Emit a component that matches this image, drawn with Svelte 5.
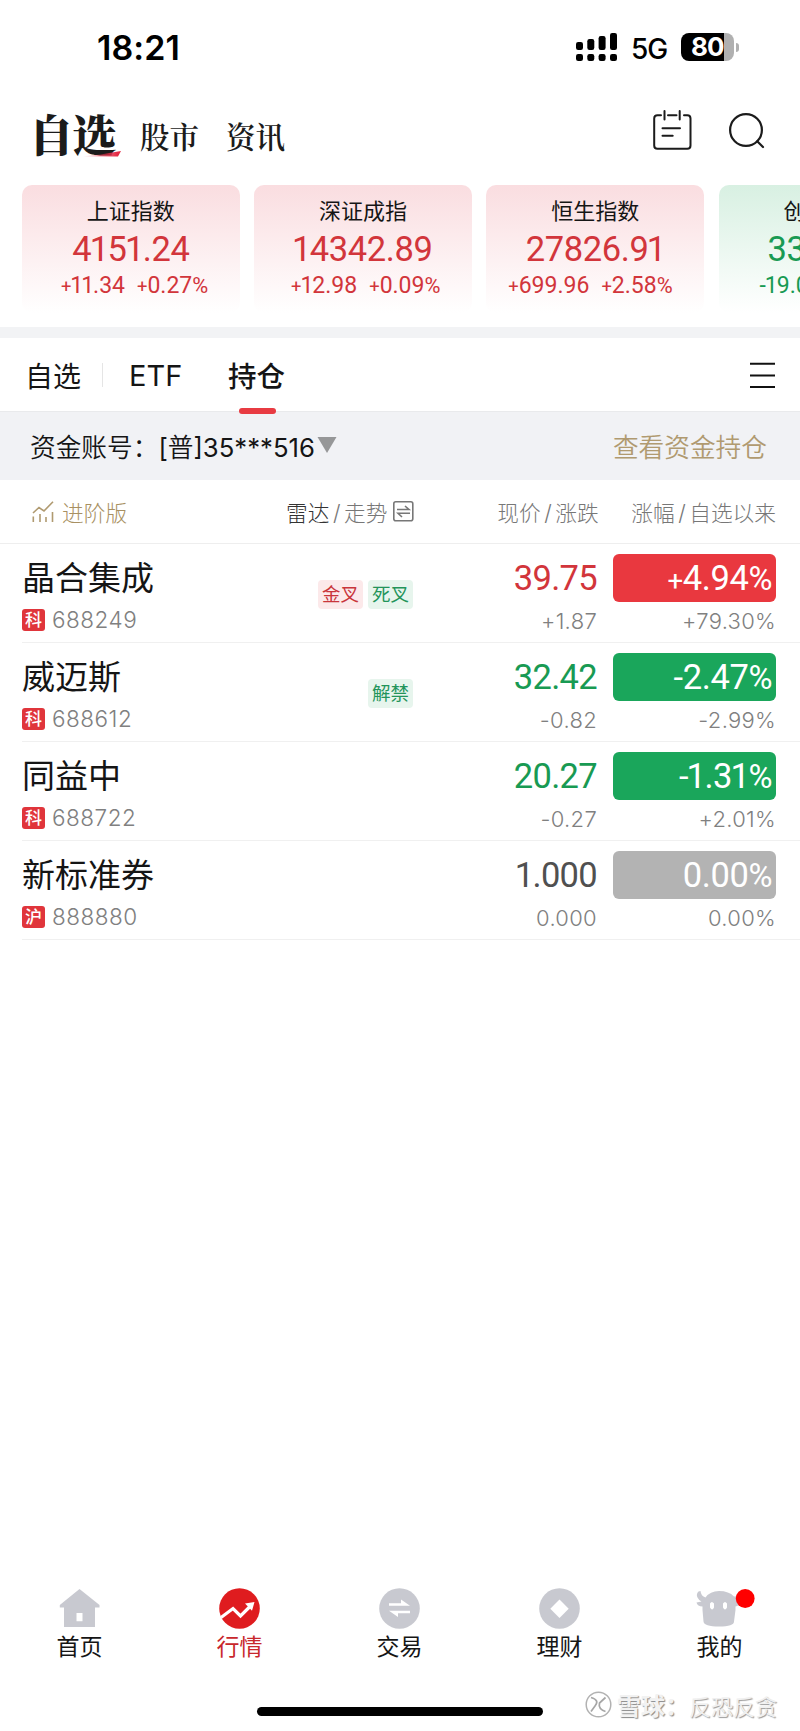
<script>
  const indices = [
    { name: '上证指数', value: '4151.24', diff: '+11.34', pct: '+0.27%', dir: 'up' },
    { name: '深证成指', value: '14342.89', diff: '+12.98', pct: '+0.09%', dir: 'up' },
    { name: '恒生指数', value: '27826.91', diff: '+699.96', pct: '+2.58%', dir: 'up' },
    { name: '创业板指', value: '3306.16', diff: '-19.05', pct: '-0.57%', dir: 'down' }
  ];

  const stocks = [
    { name: '晶合集成', mark: '科', code: '688249', tags: [['金叉', 'up'], ['死叉', 'down']], price: '39.75', diff: '+1.87', pct: '+4.94%', since: '+79.30%', dir: 'up' },
    { name: '威迈斯', mark: '科', code: '688612', tags: [['解禁', 'down']], price: '32.42', diff: '-0.82', pct: '-2.47%', since: '-2.99%', dir: 'down' },
    { name: '同益中', mark: '科', code: '688722', tags: [], price: '20.27', diff: '-0.27', pct: '-1.31%', since: '+2.01%', dir: 'down' },
    { name: '新标准券', mark: '沪', code: '888880', tags: [], price: '1.000', diff: '0.000', pct: '0.00%', since: '0.00%', dir: 'flat' }
  ];

  const kinds = { '1': 'one', '+': 'plus', '%': 'percent' };
  const runs = (text) => text.match(/[1+%]|[^1+%]+/g);
</script>

{#snippet figure(text)}{#each runs(text) as r}<span class={kinds[r] ?? 'plain'}>{r}</span>{/each}{/snippet}

<div class="screen">
  <div class="status">
    <span class="time">18:21</span>
    <svg class="signal" width="41" height="28" viewBox="0 0 41 28">
      <rect x="0" y="9" width="7" height="8" rx="2.2" /><rect x="11.3" y="6" width="7" height="11" rx="2.2" />
      <rect x="22.6" y="3" width="7" height="14" rx="2.2" /><rect x="34" y="0" width="7" height="17" rx="2.2" />
      <rect x="0" y="21" width="7" height="7" rx="2.2" /><rect x="11.3" y="21" width="7" height="7" rx="2.2" />
      <rect x="22.6" y="21" width="7" height="7" rx="2.2" /><rect x="34" y="21" width="7" height="7" rx="2.2" />
    </svg>
    <span class="net">5G</span>
    <span class="battery">80</span><i class="nub"></i>
  </div>

  <header>
    <h1>自选<svg class="swash" width="39" height="6" viewBox="0 0 39 6"><defs><linearGradient id="sw"><stop offset="0" stop-color="#e9304a" stop-opacity="0" /><stop offset="0.9" stop-color="#e42c46" /></linearGradient></defs><path d="M0 5.5Q18 4 39 0L36 5.5Z" fill="url(#sw)" /></svg></h1>
    <span class="h2">股市</span>
    <span class="h2 second">资讯</span>
    <svg class="calendar" width="39" height="41" viewBox="0 0 39 41" fill="none" stroke="#1b1b1b" stroke-width="2" stroke-linecap="round">
      <path d="M8 5.2H4.5Q1.2 5.2 1.2 8.5V35.5Q1.2 38.8 4.5 38.8H34.3Q37.5 38.8 37.5 35.5V8.5Q37.5 5.2 34.3 5.2H31M15 5.2H23.5M11.5 1V9.5M26.7 1V9.5M9.5 18.2H27M9.5 25.8H19.7" />
    </svg>
    <svg class="search" width="36" height="36" viewBox="0 0 36 36" fill="none" stroke="#1b1b1b" stroke-width="2.2" stroke-linecap="round">
      <circle cx="17" cy="17" r="15.9" /><path d="M28.2 28.2L34 34" />
    </svg>
  </header>

  <section class="indices">
    {#each indices as i}
      <div class="card {i.dir}">
        <div class="iname">{i.name}</div>
        <div class="ivalue">{@render figure(i.value)}</div>
        <div class="ichange"><div class="idiff">{@render figure(i.diff)}</div><div>{@render figure(i.pct)}</div></div>
      </div>
    {/each}
  </section>

  <div class="band"></div>

  <nav class="tabs">
    <span class="t1">自选</span><i class="sep"></i><span class="t2">ETF</span><span class="t3">持仓</span>
    <svg class="menu" width="25" height="26" viewBox="0 0 25 26" stroke="#111" stroke-width="2"><path d="M0 1.8H25M0 13.6H25M0 25H25" /></svg>
  </nav>

  <div class="account">
    <span class="acct">资金账号：<b>[</b>普<b>]35***516</b></span>
    <svg class="tri" width="20" height="16" viewBox="0 0 20 16"><path d="M.5 0H19.5L10 16Z" fill="#969798" /></svg>
    <span class="link">查看资金持仓</span>
  </div>

  <div class="heads">
    <svg class="adv" width="22" height="21" viewBox="0 0 22 21" fill="none" stroke="#b09a70" stroke-width="1.6"><path d="M1 12L7 6.5L12 10L21 .7M1.3 15.5V21M8 13V21M14 16V21M20.5 11V21" /></svg>
    <span class="advt">进阶版</span>
    <span class="radar"><em>雷达</em><s>/</s>走势</span>
    <svg class="swap" width="21" height="21" viewBox="0 0 21 21" fill="none" stroke="#777" stroke-width="1.6"><rect x=".8" y=".8" width="19" height="19" rx="2" /><path d="M4 8.5H16L12 5M17 12.3H5L9 16" /></svg>
    <span class="hprice">现价<s>/</s>涨跌</span>
    <span class="hpct">涨幅<s>/</s>自选以来</span>
  </div>

  <main>
    {#each stocks as s}
      <div class="row">
        <div class="who">
          <div class="name">{s.name}</div>
          <div class="sub"><span class="mark">{s.mark}</span><span class="code">{s.code}</span></div>
        </div>
        <div class="tags">{#each s.tags as t}<span class="tag {t[1]}">{t[0]}</span>{/each}</div>
        <div class="pcol"><div class="price {s.dir}">{@render figure(s.price)}</div><div class="small">{s.diff}</div></div>
        <div class="ccol"><div class="pill {s.dir}">{@render figure(s.pct)}</div><div class="small">{s.since}</div></div>
      </div>
    {/each}
  </main>

  <footer>
    <div class="item">
      <svg width="41" height="41" viewBox="0 0 41 41"><path fill="#c8c9d0" fill-rule="evenodd" d="M20.5 1L40.5 17V19.5H36V39H5V19.5H.8V17ZM17.5 25V33.2H23.5V25Z" /></svg>
      <span>首页</span>
    </div>
    <div class="item active">
      <svg width="41" height="41" viewBox="0 0 41 41"><circle cx="20.5" cy="20.5" r="20.3" fill="#df1c1f" /><path d="M2 29.5L14 20.5L21.5 28L31 18.5" fill="none" stroke="#fff" stroke-width="3.2" /><path d="M26 15.5L35.5 14L33 22.8Z" fill="#fff" /></svg>
      <span>行情</span>
    </div>
    <div class="item">
      <svg width="41" height="41" viewBox="0 0 41 41"><circle cx="20.5" cy="20.5" r="20.3" fill="#c8c9d0" /><path fill="#fff" d="M10 15.2H22L22 11.5L31 17.8H10ZM31 25.3H19V29L10 22.7H31Z" /></svg>
      <span>交易</span>
    </div>
    <div class="item">
      <svg width="41" height="41" viewBox="0 0 41 41"><circle cx="20.5" cy="20.5" r="20.3" fill="#c8c9d0" /><path fill="#fff" d="M20.5 11.5L29.7 20.7L20.5 30L11.3 20.7Z" /></svg>
      <span>理财</span>
    </div>
    <div class="item">
      <svg width="62" height="41" viewBox="0 0 62 41"><path fill="#c8c9d0" fill-rule="evenodd" d="M7.500 3C4.500 3 3 6.500 4.500 9.500Q6 12.500 8.500 13.500L3.500 14.500Q4.500 18.500 9.500 18.500V22L10.500 33.500Q11 38.500 26 38.500Q41 38.500 41 33.500L42.500 22V18.500Q46 18 47 14.500L43.500 13.500Q47 12 47 8L41 8.500Q36 3 26 3Q17 3 12.500 9.500Q8 8 7.500 3ZM17 17.500V19.500Q19.200 23.500 21 19.500V15.500Q18.800 12.500 17 15.500ZM30 17.500V19.500Q32 23.500 34 19.500V15.500Q32 12.500 30 15.500Z" /><circle cx="52.2" cy="10.500" r="9.400" fill="#f00" /></svg>
      <span>我的</span>
    </div>
  </footer>
  <div class="bottom">
    <i class="home"></i>
    <div class="water">
      <svg width="27" height="27" viewBox="0 0 27 27" fill="none"><circle cx="13.500" cy="13.500" r="12.300" stroke="#b2b2b2" stroke-width="1.500" /><path d="M6 6.500Q15 9 10 15L6 20.500M20.500 6.500L14.500 12Q13 18 20.500 20.500" stroke="#a6a6a6" stroke-width="1.700" /></svg>
      <span class="brand">雪球：</span><span class="user">反恐反贪</span>
    </div>
  </div>
</div>

<style>
  :global(body) { background: #fff; }
  .screen { width: 800px; height: 1731px; overflow: hidden; background: #fff; color: #151515; font-family: Inter, "Noto Sans CJK SC", sans-serif; display: flex; flex-direction: column; white-space: nowrap; }
  .screen * { box-sizing: border-box; }
  svg { display: block; flex: none; }
  .status { height: 95px; display: flex; padding-left: 97px; color: #000; flex: none; }
  .time { font-size: 34px; font-weight: 600; line-height: 40px; margin-top: 28px; width: 479px; letter-spacing: .1px; }
  .signal { margin-top: 33px; }
  .net { margin: 32px 0 0 14px; font-size: 28px; font-weight: 500; line-height: 34px; width: 50px; letter-spacing: -1px; }
  .battery { width: 53px; height: 28px; margin-top: 33px; border-radius: 8px; background: linear-gradient(90deg, #000 43px, #b0b0b0 43px); color: #fff; font-size: 26px; font-weight: 700; line-height: 28px; padding-left: 10px; letter-spacing: -.8px; }
  .nub { width: 3px; height: 9px; margin: 43px 0 0 2px; border-radius: 0 5px 5px 0; background: #b0b0b0; }

  header { height: 90px; display: flex; padding-left: 29px; flex: none; font-family: "Noto Serif CJK SC", "Noto Sans CJK SC", serif; color: #1b1b1b; }
  h1 { margin: 14px 0 0; font-size: 44.500px; line-height: 48px; font-weight: 800; width: 111px; position: relative; letter-spacing: -1.500px; }
  .swash { position: absolute; left: 53px; top: 42px; }
  .h2 { font-size: 29.5px; font-weight: 600; line-height: 40px; margin-top: 20px; width: 86px; }
  .second { width: auto; }
  .calendar { margin: 15px 0 0 auto; }
  .search { margin: 18px 35px 0 37px; }

  .indices { height: 142px; display: flex; gap: 14.5px; padding-left: 22px; flex: none; overflow: hidden; }
  .card { flex: none; width: 217.7px; height: 128px; border-radius: 10px; padding-top: 12px; text-align: center; }
  .card.up { background: linear-gradient(#fadde0, #fff); color: #d2353b; }
  .card.down { background: linear-gradient(#d8f0e2, #fff); color: #189a53; }
  .iname { font-size: 22px; line-height: 28px; color: #151515; }
  .ivalue { font-family: Roboto, sans-serif; font-size: 34.500px; font-weight: 450; line-height: 40px; margin-top: 4px; letter-spacing: -.4px; }
  .ichange { font-family: Roboto, sans-serif; font-size: 23px; font-weight: 400; line-height: 28px; margin-top: 3px; display: flex; gap: 12px; }
  .idiff { width: 103px; text-align: right; }
  .one { letter-spacing: -.045em; margin-left: -.045em; }
  .plus { font-size: .8em; }
  .percent { font-size: .95em; font-weight: 400; }
  .band { height: 11px; background: #f2f3f5; flex: none; }

  .tabs { height: 73px; display: flex; align-items: center; padding-left: 25px; flex: none; font-size: 28px; }
  .t1 { width: 77px; }
  .sep { width: 1px; height: 24px; background: #e5e5e5; margin-right: 26px; }
  .t2 { width: 99px; font-size: 29px; padding-top: 1px; }
  .t3 { font-weight: 500; font-size: 28.5px; position: relative; }
  .t3::after { content: ""; position: absolute; left: 11px; bottom: -19px; width: 37px; height: 6px; border-radius: 3px; background: #e83b42; }
  .menu { margin-left: auto; margin-right: 25px; }

  .account { height: 69px; display: flex; align-items: center; padding: 0 33px 2px 30px; background: #f1f2f5; border-top: 1px solid #e9eaec; flex: none; font-size: 25.7px; font-weight: 350; }
  .acct b { font-weight: 400; }
  .tri { margin: 0 0 0 2px; }
  .link { margin-left: auto; color: #b09a70; font-weight: 350; }

  .heads { height: 64px; border-bottom: 1px solid #eee; display: flex; align-items: center; flex: none; font-size: 21.7px; color: #777; padding-left: 32px; font-weight: 300; }
  .heads s { text-decoration: none; margin: 0 3.500px; }
  .heads em { font-style: normal; color: #333; }
  .advt { color: #a89062; margin-left: 8px; width: 224px; }
  .radar { width: 107px; }
  .hprice { margin-left: auto; width: 134px; }
  .hpct { margin-right: 24px; }

  main { flex: none; }
  .row { height: 99px; margin-left: 22px; border-bottom: 1px solid #f0f0f0; display: flex; }
  .who { width: 200px; }
  .name { font-size: 33px; line-height: 40px; margin-top: 14px; }
  .sub { display: flex; align-items: center; margin-top: 10px; height: 23px; }
  .mark { width: 23px; height: 22px; border-radius: 3px; background: #e0353b; color: #fff; font-size: 17px; line-height: 22px; text-align: center; font-weight: 500; }
  .code { margin-left: 7px; font-size: 22.500px; color: #808080; font-weight: 300; letter-spacing: .5px; }
  .tags { width: 191px; display: flex; justify-content: flex-end; gap: 5px; padding-top: 36px; }
  .tag { width: 45px; height: 29px; border-radius: 4px; font-size: 18.500px; line-height: 29px; text-align: center; }
  .tag.up { background: #fce9ea; color: #c9353b; }
  .tag.down { background: #e7f5ed; color: #23945a; }
  .pcol { width: 184px; text-align: right; }
  .price { font-family: Roboto, sans-serif; font-size: 34.500px; font-weight: 450; line-height: 48px; height: 48px; margin-top: 10px; letter-spacing: -.7px; }
  .price.up { color: #d2353b; }
  .price.down { color: #189a53; }
  .price.flat { color: #505050; }
  .ccol { width: 179px; text-align: right; padding-top: 10px; }
  .pill { width: 163px; height: 48px; margin-left: 16px; border-radius: 6px; font-family: Roboto, sans-serif; font-size: 34.500px; font-weight: 450; line-height: 48px; padding-right: 4px; color: #fff; letter-spacing: -.4px; }
  .pill.up { background: #e9383f; }
  .pill.down { background: #1aa65b; }
  .pill.flat { background: #b3b3b3; }
  .small { font-size: 22px; font-weight: 300; color: #808080; line-height: 26px; margin-top: 6px; letter-spacing: .3px; }

  footer { margin-top: auto; flex: none; display: flex; height: 108px; margin-left: -.6px; }
  .item { width: 160px; text-align: center; font-size: 23px; line-height: 30px; color: #151515; }
  .item svg { margin: 0 auto 3px; }
  .item:last-child svg { margin-left: 54px; }
  .active { color: #c8272c; }
  .bottom { height: 35px; flex: none; display: flex; padding-left: 257px; }
  .home { width: 286px; height: 9px; border-radius: 5px; background: #000; margin-top: 11px; }
  .water { display: flex; align-items: center; height: 27px; margin: -5px 0 0 42px; font-size: 22px; }
  .brand { margin-left: 5px; font-weight: 700; font-size: 24px; color: #f2f2f2; text-shadow: 1px 1px 1px #888; width: 72px; }
  .user { color: #f0f0f0; text-shadow: 1px 1px 1px #999; }
</style>
